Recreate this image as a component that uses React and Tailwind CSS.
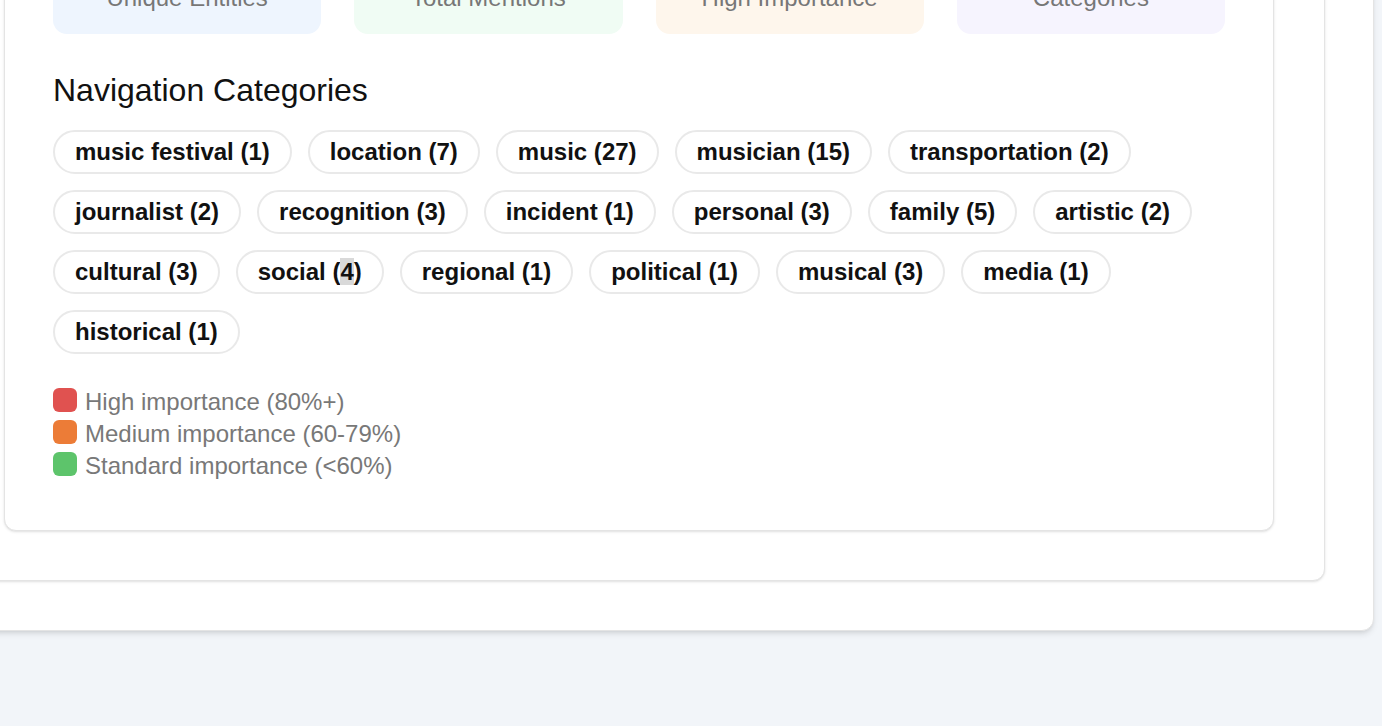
import React from "react";

const stats = [
  { label: "Unique Entities", value: "42", bg: "bg-[#eef5fe]", color: "text-[#2f6fd6]" },
  { label: "Total Mentions", value: "82", bg: "bg-[#f0fcf4]", color: "text-[#2e9e51]" },
  { label: "High Importance", value: "9", bg: "bg-[#fef6ec]", color: "text-[#e0782f]" },
  { label: "Categories", value: "18", bg: "bg-[#f6f4fe]", color: "text-[#7a5ce0]" },
];

const categories = [
  ["music festival", 1],
  ["location", 7],
  ["music", 27],
  ["musician", 15],
  ["transportation", 2],
  ["journalist", 2],
  ["recognition", 3],
  ["incident", 1],
  ["personal", 3],
  ["family", 5],
  ["artistic", 2],
  ["cultural", 3],
  ["social", 4],
  ["regional", 1],
  ["political", 1],
  ["musical", 3],
  ["media", 1],
  ["historical", 1],
];

const legend = [
  { label: "High importance (80%+)", color: "bg-[#e05250]" },
  { label: "Medium importance (60-79%)", color: "bg-[#ec7c37]" },
  { label: "Standard importance (<60%)", color: "bg-[#5dc46b]" },
];

const StatCard = ({ label, value, bg, color }) => (
  <div className={`h-[140px] rounded-[14px] ${bg} flex flex-col items-center justify-end pb-[20px]`}>
    <div className={`text-[44px] leading-[52px] font-bold ${color}`}>{value}</div>
    <div className="text-[24px] leading-[32px] text-[#777777]">{label}</div>
  </div>
);

const CategoryChip = ({ name, count }) => (
  <button
    type="button"
    className="h-[44px] px-5 flex items-center rounded-full border-2 border-[#e9e9e9] bg-white text-[24px] font-bold text-[#111111] whitespace-nowrap"
  >
    {name === "social" ? (
      <span>
        social (<span className="bg-[#d9d9d9]">4</span>)
      </span>
    ) : (
      <span>
        {name} ({count})
      </span>
    )}
  </button>
);

export default function App() {
  return (
    <div className="h-screen overflow-hidden bg-[#f2f5f9] font-['Liberation_Sans',Arial,sans-serif]">
      <div className="w-[1468px] -ml-[94px] -mt-[253px] bg-white border border-[#e4e4e4] rounded-xl shadow-md px-12 pt-12 pb-[49px]">
        <div className="bg-white border border-[#e4e4e4] rounded-xl shadow-sm pl-12 pr-[50px] pt-12 pb-[49px]">
          <div className="bg-white border border-[#e4e4e4] rounded-xl shadow-sm p-12">
            <div className="grid grid-cols-4 gap-[33px]">
              {stats.map((s) => (
                <StatCard key={s.label} {...s} />
              ))}
            </div>

            <h2 className="mt-[36px] text-[32px] leading-[40px] font-normal text-[#111111]">
              Navigation Categories
            </h2>

            <div className="mt-5 flex flex-wrap gap-4">
              {categories.map(([name, count]) => (
                <CategoryChip key={name} name={name} count={count} />
              ))}
            </div>

            <div className="mt-[32px] flex flex-col">
              {legend.map((l) => (
                <div key={l.label} className="flex items-start gap-2 text-[24px] leading-[32px] text-[#787878]">
                  <span className={`mt-[2px] w-6 h-6 rounded-md ${l.color}`} />
                  <span>{l.label}</span>
                </div>
              ))}
            </div>
          </div>
        </div>
      </div>
    </div>
  );
}
